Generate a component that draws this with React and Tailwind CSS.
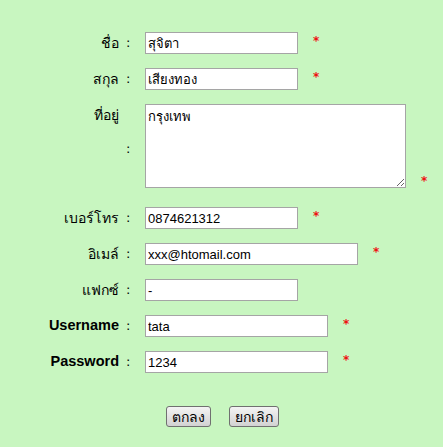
import React from 'react'

const rows = [
  { label: 'ชื่อ', value: 'สุจิตา', w: 'w-[153px]', star: true },
  { label: 'สกุล', value: 'เสียงทอง', w: 'w-[153px]', star: true },
]
const rows2 = [
  { label: 'เบอร์โทร', value: '0874621312', w: 'w-[153px]', star: true },
  { label: 'อิเมล์', value: 'xxx@htomail.com', w: 'w-[213px]', star: true },
  { label: 'แฟกซ์', value: '-', w: 'w-[153px]' },
  { label: 'Username', value: 'tata', w: 'w-[183px]', star: true, bold: true },
  { label: 'Password', value: '1234', w: 'w-[183px]', star: true, bold: true },
]

function Star({ className = '' }) {
  return <span className={`ml-[15px] text-[12px] font-bold leading-none text-[#ee1111] ${className}`}>*</span>
}

function Row({ label, value, w, star, bold }) {
  return (
    <div className="flex items-center h-[22px] mb-[14px]">
      <div className={`w-[119px] text-right ${bold ? 'font-bold text-[14.5px] font-["Liberation_Sans",sans-serif]' : 'text-[14px]'}`}>{label}</div>
      <div className="w-[26px] pl-[7px] text-[13px]">:</div>
      <input
        defaultValue={value}
        className={`${w} h-[22px] bg-white border border-[#a5a5a5] px-[2px] text-[13px] font-["Liberation_Sans",sans-serif] outline-none`}
      />
      {star && <Star className="-mt-[4px]" />}
    </div>
  )
}

export default function App() {
  return (
    <div className="w-[443px] h-[447px] bg-[#c8f6c0] pt-[32px] text-black font-['Tahoma','DejaVu_Sans',sans-serif]">
      {rows.map((r) => <Row key={r.label} {...r} />)}

      {/* Address */}
      <div className="flex mb-[19px]">
        <div className="w-[119px] text-right text-[14px] pt-[1px]">ที่อยู่</div>
        <div className="w-[26px] pl-[7px] text-[13px] flex items-center pt-[6px]">:</div>
        <div className="flex items-end">
          <textarea
            defaultValue="กรุงเทพ"
            className="w-[261px] h-[84px] bg-white border border-[#a5a5a5] px-[2px] py-[2px] text-[13px] outline-none"
          />
          <Star className="mb-[1px]" />
        </div>
      </div>

      {rows2.map((r) => <Row key={r.label} {...r} />)}

      <div className="flex justify-center gap-[18px] mt-[33px] pl-[2px]">
        <button className="h-[21px] px-[5px] text-[14px] rounded-[3px] border border-[#707070] bg-gradient-to-b from-[#f4f4f4] to-[#d2d2d2] leading-none">ตกลง</button>
        <button className="h-[21px] px-[5px] text-[14px] rounded-[3px] border border-[#707070] bg-gradient-to-b from-[#f4f4f4] to-[#d2d2d2] leading-none">ยกเลิก</button>
      </div>
    </div>
  )
}
